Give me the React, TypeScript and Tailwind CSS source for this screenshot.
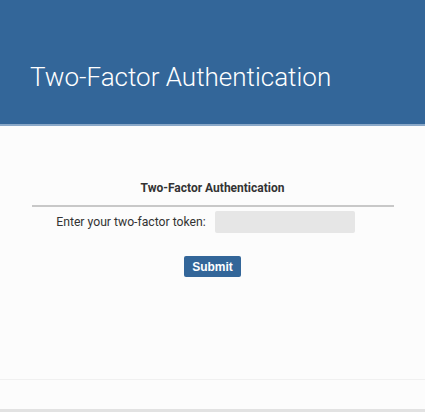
export default function App() {
  return (
    <div className="w-[425px] h-[412px] bg-[#fcfcfc] flex flex-col font-['Roboto',sans-serif] overflow-hidden">
      {/* Header */}
      <header className="h-[126px] shrink-0 bg-[#336699] border-b-2 border-[#8aa8c8] flex items-center pl-[30px] pt-[30px]">
        <h1 className="text-[26px] font-light text-white leading-none">Two-Factor Authentication</h1>
      </header>

      {/* Panel */}
      <main className="h-[254px] shrink-0 border-b border-[#f0f0f0] pt-[54px] flex flex-col items-center">
        <h2 className="text-[12px] font-bold text-[#333] leading-[16px]">Two-Factor Authentication</h2>
        <div className="w-[362px] h-[2px] bg-[#c8c8c8] mt-[9px]" />
        <div className="flex items-center gap-[9px] mt-[4px] pr-[14px]">
          <label className="text-[12.2px] text-[#333]">Enter your two-factor token:</label>
          <input className="w-[140px] h-[22px] bg-[#e6e6e6] rounded-[2px] outline-none px-2 text-[12px]" />
        </div>
        <button className="mt-[23px] h-[21px] px-[8px] bg-[#336699] text-white text-[12px] font-bold rounded-[2px] font-['Liberation_Sans',sans-serif]">
          Submit
        </button>
      </main>

      <div className="flex-1 bg-[#fcfcfc] border-b-[3px] border-[#e2e2e2]" />
    </div>
  );
}
